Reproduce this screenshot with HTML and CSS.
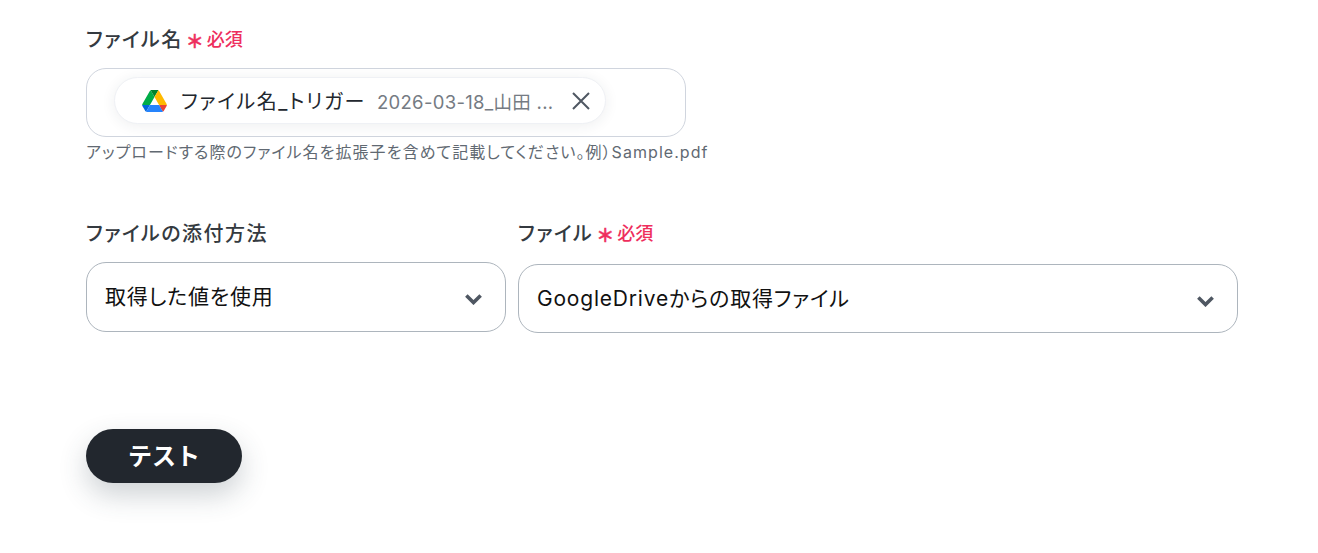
FILE: index.html
```html
<!DOCTYPE html>
<html lang="ja">
<head>
    <meta charset="UTF-8">
    <meta name="viewport" content="width=device-width, initial-scale=1.0">
    <title>ファイル添付</title>
    <link rel="stylesheet" href="styles.css">
</head>
<body>
    <div class="form">
        <!-- File name -->
        <section class="field">
            <label class="label">ファイル名<span class="required"><span class="star">＊</span>必須</span></label>
            <div class="token-input">
                <div class="chip">
                    <svg class="drive" viewBox="0 0 87.3 78">
                        <path d="m6.6 66.85 3.85 6.65c.8 1.4 1.95 2.5 3.3 3.3l13.75-23.8h-27.5c0 1.55.4 3.1 1.2 4.5z" fill="#0066da"/>
                        <path d="m43.65 25-13.75-23.8c-1.35.8-2.5 1.9-3.3 3.3l-25.4 44a9.06 9.06 0 0 0 -1.2 4.5h27.5z" fill="#00ac47"/>
                        <path d="m73.55 76.8c1.35-.8 2.5-1.9 3.3-3.3l1.6-2.75 7.65-13.25c.8-1.4 1.2-2.95 1.2-4.5h-27.502l5.852 11.5z" fill="#ea4335"/>
                        <path d="m43.65 25 13.75-23.8c-1.35-.8-2.9-1.2-4.5-1.2h-18.5c-1.6 0-3.15.45-4.5 1.2z" fill="#00832d"/>
                        <path d="m59.8 53h-32.3l-13.75 23.8c1.35.8 2.9 1.2 4.5 1.2h50.8c1.6 0 3.15-.45 4.5-1.2z" fill="#2684fc"/>
                        <path d="m73.4 26.5-12.7-22c-.8-1.4-1.95-2.5-3.3-3.3l-13.75 23.8 16.15 28h27.45c0-1.55-.4-3.1-1.2-4.5z" fill="#ffba00"/>
                    </svg>
                    <span class="chip-name">ファイル名_トリガー</span>
                    <span class="chip-value">2026-03-18_山田 ...</span>
                    <svg class="chip-close" viewBox="0 0 20 20">
                        <path d="M2 2 18 18M18 2 2 18"/>
                    </svg>
                </div>
            </div>
            <p class="help">アップロードする際のファイル名を拡張子を含めて記載してください。例）Sample.pdf</p>
        </section>

        <!-- Attachment -->
        <section class="row">
            <div class="col-method">
                <label class="label">ファイルの添付方法</label>
                <div class="select">
                    <span>取得した値を使用</span>
                    <svg class="chevron" viewBox="0 0 16 10"><path d="M2 2 8 8 14 2"/></svg>
                </div>
            </div>
            <div class="col-file">
                <label class="label">ファイル<span class="required"><span class="star">＊</span>必須</span></label>
                <div class="select select-file">
                    <span>GoogleDriveからの取得ファイル</span>
                    <svg class="chevron" viewBox="0 0 16 10"><path d="M2 2 8 8 14 2"/></svg>
                </div>
            </div>
        </section>

        <button class="test-button">テスト</button>
    </div>
</body>
</html>
```

FILE: styles.css
```css
* {
    margin: 0;
    padding: 0;
    box-sizing: border-box;
}

body {
    font-family: 'Inter', 'Noto Sans CJK JP', sans-serif;
    font-feature-settings: "palt";
    background-color: #fff;
    color: #22272e;
}

.form {
    width: 1152px;
    margin-left: 86px;
    padding-top: 23px;
    padding-bottom: 70px;
}

.label {
    display: flex;
    align-items: center;
    height: 30px;
    font-size: 20px;
    font-weight: 500;
    letter-spacing: 1.5px;
    color: #343a40;
}

.required {
    display: flex;
    align-items: center;
    margin-left: 3px;
    font-size: 18px;
    font-weight: 500;
    letter-spacing: 0;
    color: #ee2e5d;
}

.star {
    padding-top: 3px;
    margin-right: 3px;
    font-size: 18px;
    font-weight: 700;
    font-feature-settings: normal;
    -webkit-text-stroke: 0.5px #ee2e5d;
}

.token-input {
    width: 600px;
    height: 69px;
    margin-top: 15px;
    padding: 8px 27px;
    border: 1px solid #d0d5de;
    border-radius: 20px;
}

.chip {
    display: flex;
    align-items: center;
    width: 492px;
    height: 47px;
    padding-left: 27px;
    background-color: #fff;
    border: 1px solid #eff1f5;
    border-radius: 24px;
    box-shadow: 0 2px 14px rgba(40, 50, 70, 0.08);
}

.drive {
    width: 25px;
    height: 22px;
    flex-shrink: 0;
}

.chip-name {
    margin-left: 14px;
    font-size: 20px;
    letter-spacing: 1.6px;
    color: #22272e;
}

.chip-value {
    margin-left: 11px;
    font-size: 18.5px;
    letter-spacing: 0.3px;
    color: #757b83;
}

.chip-close {
    width: 20px;
    height: 20px;
    margin-left: auto;
    margin-right: 14px;
    fill: none;
    stroke: #4f5762;
    stroke-width: 2;
}

.help {
    margin-top: 5px;
    font-size: 16px;
    line-height: 20px;
    letter-spacing: 1.05px;
    color: #616972;
}

.row {
    display: flex;
    gap: 12px;
    margin-top: 55px;
}

.col-method {
    width: 420px;
}

.col-file {
    width: 720px;
}

.select {
    display: flex;
    align-items: center;
    justify-content: space-between;
    height: 70px;
    margin-top: 15px;
    padding: 0 22px 4px 18px;
    border: 1px solid #adb5bd;
    border-radius: 20px;
    font-size: 21px;
    letter-spacing: 0.8px;
    color: #111;
}

.select-file {
    margin-top: 17px;
    height: 69px;
}

.chevron {
    width: 19px;
    height: 12px;
    margin-top: 8px;
    fill: none;
    stroke: #4f5762;
    stroke-width: 3;
}

.test-button {
    display: block;
    width: 156px;
    height: 54px;
    margin-top: 96px;
    padding-bottom: 4px;
    background-color: #22272e;
    color: #fff;
    border: none;
    border-radius: 27px;
    font-family: inherit;
    font-size: 24px;
    font-weight: 700;
    box-shadow: 0 12px 28px rgba(50, 65, 80, 0.24);
}
```
